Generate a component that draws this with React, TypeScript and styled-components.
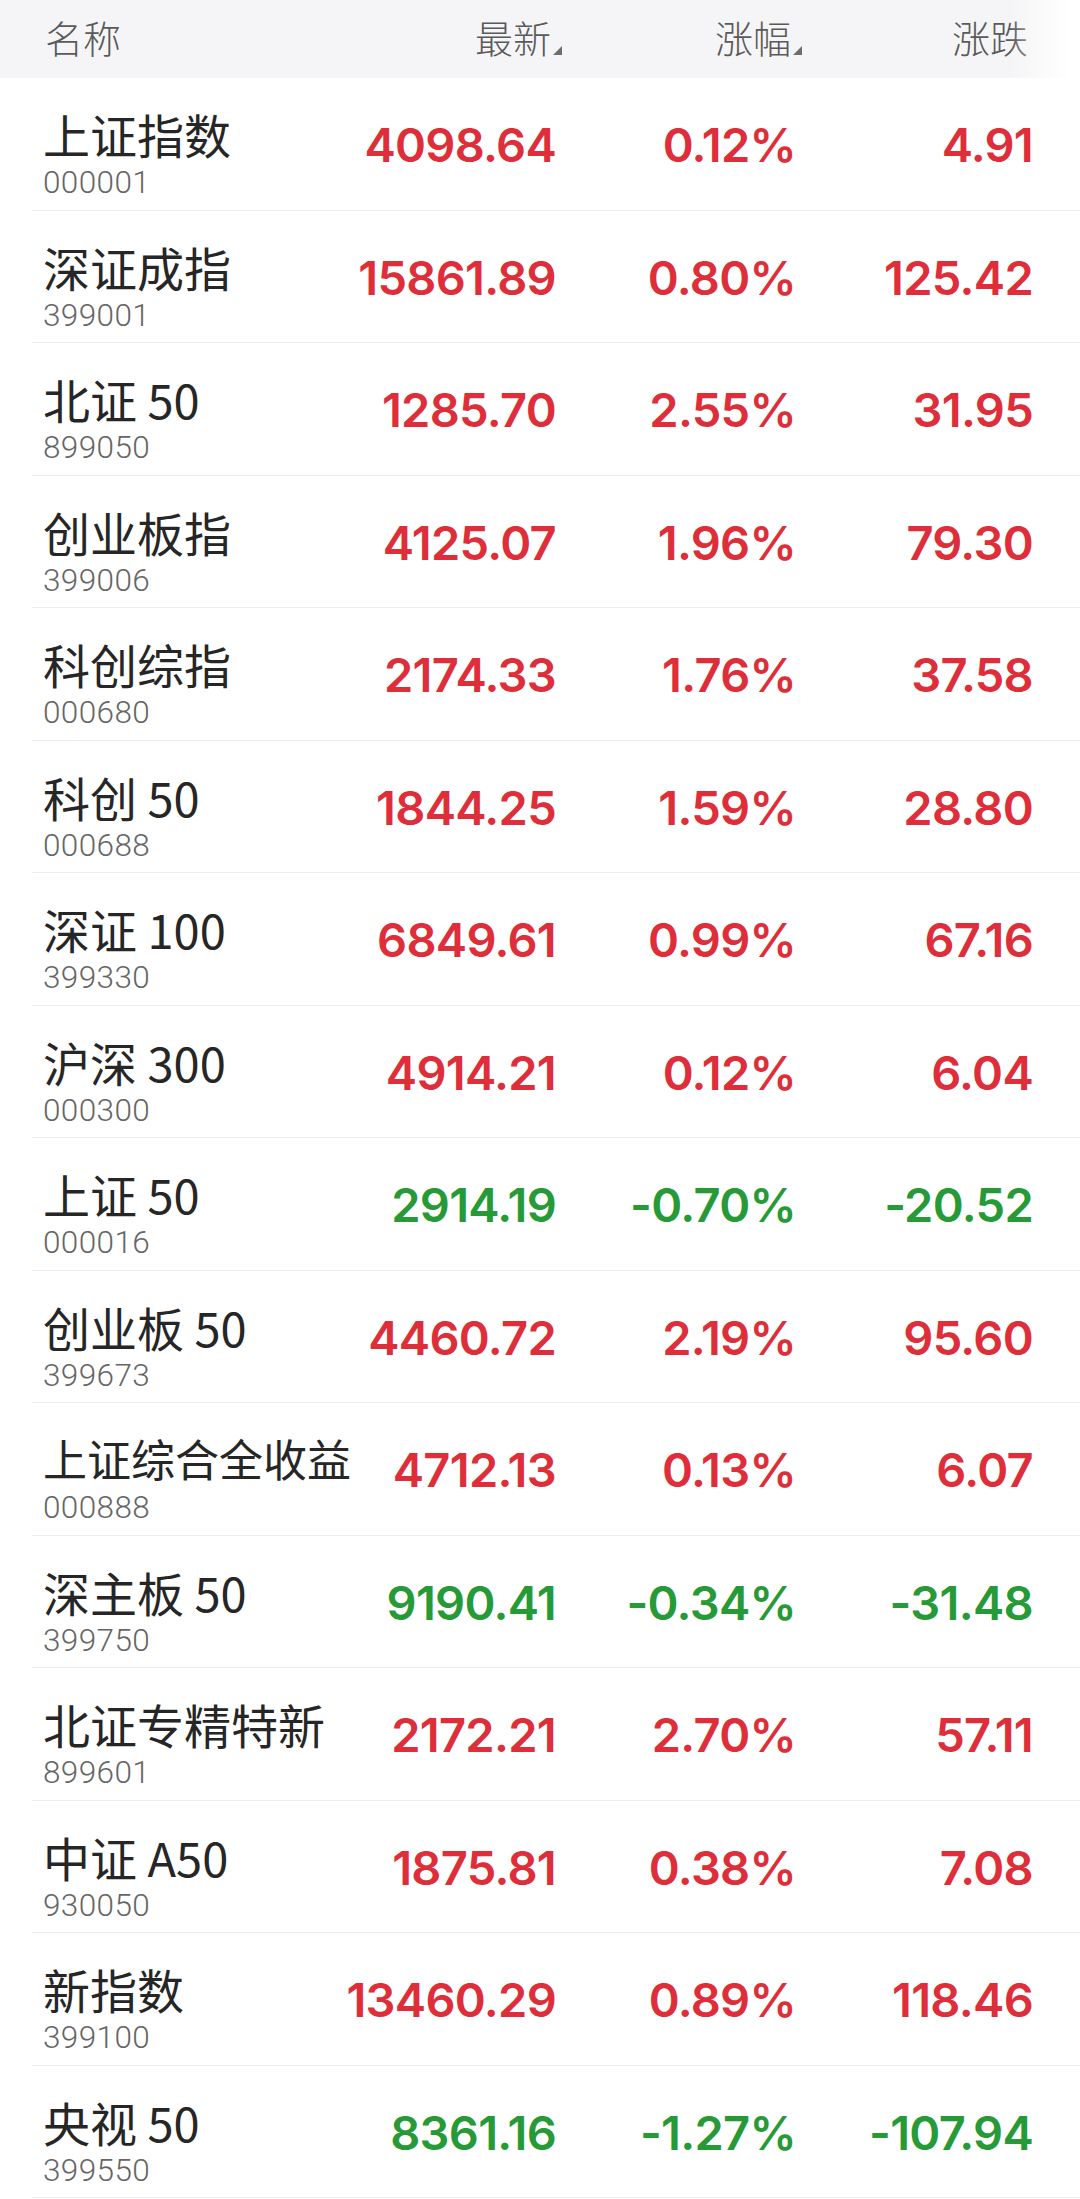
import {FC} from 'react';
import styled, {createGlobalStyle} from 'styled-components';

const GlobalStyle = createGlobalStyle`
  html, body {
    margin: 0;
    padding: 0;
    background: #ffffff;
  }
  body {
    font-family: "Noto Sans CJK SC", "Noto Sans", sans-serif;
  }
`;

type Quote = {
  name: string;
  code: string;
  price: string;
  pct: string;
  change: string;
  compact?: boolean;
};

const quotes: Quote[] = [
  {name: '上证指数', code: '000001', price: '4098.64', pct: '0.12%', change: '4.91'},
  {name: '深证成指', code: '399001', price: '15861.89', pct: '0.80%', change: '125.42'},
  {name: '北证 50', code: '899050', price: '1285.70', pct: '2.55%', change: '31.95'},
  {name: '创业板指', code: '399006', price: '4125.07', pct: '1.96%', change: '79.30'},
  {name: '科创综指', code: '000680', price: '2174.33', pct: '1.76%', change: '37.58'},
  {name: '科创 50', code: '000688', price: '1844.25', pct: '1.59%', change: '28.80'},
  {name: '深证 100', code: '399330', price: '6849.61', pct: '0.99%', change: '67.16'},
  {name: '沪深 300', code: '000300', price: '4914.21', pct: '0.12%', change: '6.04'},
  {name: '上证 50', code: '000016', price: '2914.19', pct: '-0.70%', change: '-20.52'},
  {name: '创业板 50', code: '399673', price: '4460.72', pct: '2.19%', change: '95.60'},
  {name: '上证综合全收益', code: '000888', price: '4712.13', pct: '0.13%', change: '6.07', compact: true},
  {name: '深主板 50', code: '399750', price: '9190.41', pct: '-0.34%', change: '-31.48'},
  {name: '北证专精特新', code: '899601', price: '2172.21', pct: '2.70%', change: '57.11'},
  {name: '中证 A50', code: '930050', price: '1875.81', pct: '0.38%', change: '7.08'},
  {name: '新指数', code: '399100', price: '13460.29', pct: '0.89%', change: '118.46'},
  {name: '央视 50', code: '399550', price: '8361.16', pct: '-1.27%', change: '-107.94'},
];

// name | 最新 | 涨幅 | 涨跌 — right edges at ~555 / 795 / 1032
const COLUMNS = '302px 211px 240px 237px';

const Page = styled.div`
  width: 1080px;
  height: 2199px;
  overflow: hidden;
  background: #ffffff;
`;

const Header = styled.div`
  position: relative;
  display: grid;
  grid-template-columns: ${COLUMNS};
  align-items: center;
  height: 78px;
  padding-left: 43px;
  padding-bottom: 4px;
  box-sizing: border-box;
  background: #f5f5f7;
  color: #5a5a5a;
  font-size: 38px;
  font-weight: 300;

  &::after {
    content: '';
    position: absolute;
    top: 0;
    right: 0;
    width: 70px;
    height: 100%;
    background: linear-gradient(to right, rgba(255, 255, 255, 0), #ffffff 85%);
  }
`;

const HeadCell = styled.div<{$align?: 'left' | 'right'}>`
  text-align: ${p => p.$align || 'right'};
  padding-left: ${p => (p.$align === 'left' ? '2px' : '0')};
  padding-right: 5px;
  line-height: 44px;
`;

const SortLabel = styled.span<{$sort?: boolean}>`
  position: relative;
  display: inline-block;

  &::after {
    content: '';
    display: ${p => (p.$sort ? 'block' : 'none')};
    position: absolute;
    right: -11px;
    bottom: 4px;
    width: 0;
    height: 0;
    border-style: solid;
    border-width: 0 0 9px 9px;
    border-color: transparent transparent #6e6e6e transparent;
  }
`;

const Row = styled.div`
  display: grid;
  grid-template-columns: ${COLUMNS};
  align-items: center;
  height: 131.5px;
  margin-left: 32px;
  padding-left: 11px;
  border-bottom: 1px solid #ececec;
`;

const NameBlock = styled.div`
  align-self: stretch;
  display: flex;
  flex-direction: column;
  padding-top: 28px;
  white-space: nowrap;
`;

const Name = styled.div<{$compact?: boolean}>`
  font-size: ${p => (p.$compact ? '44px' : '47px')};
  line-height: 55px;
  color: #262626;
  font-weight: 400;
`;

const Code = styled.div`
  margin-top: 6px;
  font-family: "Roboto", "Liberation Sans", sans-serif;
  font-size: 31.5px;
  line-height: 31px;
  font-weight: 300;
  letter-spacing: 0.4px;
  color: #666666;
`;

const Value = styled.div<{$down: boolean}>`
  text-align: right;
  white-space: nowrap;
  font-family: "Inter", "Liberation Sans", sans-serif;
  font-size: 47px;
  font-weight: 600;
  letter-spacing: -0.7px;
  color: ${p => (p.$down ? '#269a36' : '#dd2e39')};
  padding-top: 2px;
`;

const QuoteRow: FC<{q: Quote}> = ({q}) => {
  const down = q.pct.startsWith('-');
  return (
    <Row>
      <NameBlock>
        <Name $compact={q.compact}>{q.name}</Name>
        <Code>{q.code}</Code>
      </NameBlock>
      <Value $down={down}>{q.price}</Value>
      <Value $down={down}>{q.pct}</Value>
      <Value $down={down}>{q.change}</Value>
    </Row>
  );
};

export default function App() {
  return (
    <Page>
      <GlobalStyle />
      <Header>
        <HeadCell $align="left">名称</HeadCell>
        <HeadCell>
          <SortLabel $sort>最新</SortLabel>
        </HeadCell>
        <HeadCell>
          <SortLabel $sort>涨幅</SortLabel>
        </HeadCell>
        <HeadCell>
          <SortLabel>涨跌</SortLabel>
        </HeadCell>
      </Header>
      {quotes.map(q => (
        <QuoteRow key={q.code} q={q} />
      ))}
    </Page>
  );
}
